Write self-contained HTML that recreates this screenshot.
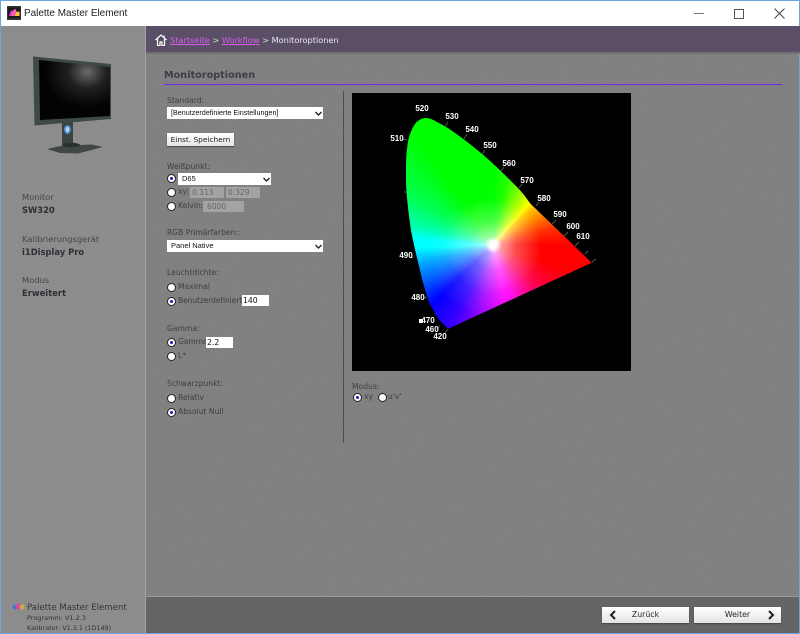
<!DOCTYPE html>
<html><head><meta charset="utf-8"><style>
html,body{margin:0;padding:0;background:#808080}
#r{position:relative;width:800px;height:634px;overflow:hidden;background:#808080;font-family:"DejaVu Sans","Liberation Sans",sans-serif}
#r div,#r svg{position:absolute}
.t{white-space:nowrap;line-height:12px;height:12px}
.l{font-size:7.600px;color:#3f3f44}
.s{font-size:8.350px;color:#46464a}
.b{font-size:8.400px;color:#2e3036;font-weight:bold}
.sel,.in{background:#fff;color:#111;font-size:7.500px;line-height:12px;white-space:nowrap;font-family:"Liberation Sans",sans-serif}
.in.d{background:#a3a3a3;color:#666;font-family:"DejaVu Sans",sans-serif;font-size:7.500px;line-height:11px}
.rd{width:7px;height:7px;border-radius:50%;background:#fff;border:1px solid #222}
.rd.on::after{content:"";position:absolute;left:2px;top:2px;width:3px;height:3px;border-radius:50%;background:#1a18b8}
.w{color:#fff;font:bold 8px/10px "Liberation Sans",sans-serif;transform:translate(-50%,-50%);white-space:nowrap;position:absolute}
.btn{background:linear-gradient(#fff,#e4e4e4);box-shadow:0 1px 1px #444;color:#222;text-align:center;white-space:nowrap}
</style></head><body><div id="r">
<div style="left:146px;top:26px;width:654px;height:608px;background:#7e7e7e"></div>
<div style="left:0;top:26px;width:145px;height:608px;background:#8a8a8a"></div>
<div style="left:145px;top:26px;width:1px;height:608px;background:#a2a2a2"></div>
<svg style="left:0;top:26px;opacity:.1" width="800" height="608"><filter id="n"><feTurbulence type="fractalNoise" baseFrequency=".9" numOctaves="2"/><feColorMatrix type="saturate" values="0"/></filter><rect width="800" height="608" filter="url(#n)"/></svg>
<div style="left:0;top:0;width:800px;height:26px;background:#fff"></div>
<div style="left:0;top:0;width:800px;height:1px;background:#6ea5e0"></div>
<div style="left:0;top:0;width:1px;height:634px;background:#6ea5e0"></div>
<div style="left:799px;top:0;width:1px;height:634px;background:#6ea5e0"></div>
<div style="left:0;top:633px;width:800px;height:1px;background:#6ea5e0"></div>

<!-- title bar -->
<svg style="left:7px;top:6px" width="14" height="14" viewBox="0 0 14 14"><rect width="14" height="14" fill="#333"/><rect x="1" y="1.500" width="12" height="10.500" fill="#1a1a1a"/><path d="M2 10 Q3 5 5 4 L7 10Z" fill="#c43ae0"/><path d="M4 10 Q5 3 9 3 L10 10Z" fill="#f85ab0"/><path d="M8 10 Q9 4 12.500 6 L12.500 10Z" fill="#f8c830"/></svg>
<div class="t" style="left:24px;top:7px;font:9.950px/14px 'Liberation Sans',sans-serif;color:#222">Palette Master Element</div>
<div style="left:694px;top:13px;width:10px;height:1px;background:#777"></div>
<div style="left:734px;top:9px;width:8px;height:8px;border:1px solid #555"></div>
<svg style="left:774px;top:8px" width="11" height="11" viewBox="0 0 11 11"><path d="M.5.5L10.500 10.500M10.500.5L.5 10.500" stroke="#444" stroke-width="1" fill="none"/></svg>

<!-- breadcrumb -->
<div style="left:146px;top:26px;width:654px;height:26px;background:#5a4f67"></div>
<div style="left:146px;top:52px;width:654px;height:2px;background:#717171"></div>
<svg style="left:155px;top:34px" width="12" height="12" viewBox="0 0 12 12"><path d="M.5 6L6 1l5.500 5M2.500 5v6.500h2.500V8h2v3.500h2.500V5M9 1.500v2" fill="none" stroke="#fff" stroke-width="1.200"/></svg>
<div class="t" style="left:170px;top:34px;font-size:8.200px;color:#ddd"><span style="color:#d85cf0;text-decoration:underline">Startseite</span> &gt; <span style="color:#d85cf0;text-decoration:underline">Workflow</span> &gt; <span style="color:#e8e8f0">Monitoroptionen</span></div>

<!-- heading -->
<div class="t" style="left:164px;top:70px;font-size:9.700px;font-weight:bold;color:#3c3e46">Monitoroptionen</div>
<div style="left:164px;top:84px;width:618px;height:1px;background:#7a22e8"></div>
<div style="left:343px;top:91px;width:1px;height:352px;background:#4e4e4e"></div>

<!-- sidebar monitor -->
<svg style="left:30px;top:52px" width="86" height="105" viewBox="30 52 86 105">
<path d="M47 149L60 146 92 144.500 103 147 78 153.500 60 153Z" fill="#3f4845"/>
<rect x="62" y="122" width="11" height="23" fill="#3b4341"/>
<ellipse cx="67.500" cy="129.500" rx="3.500" ry="4.500" fill="#4f8fcf"/>
<ellipse cx="67.500" cy="129.500" rx="1.800" ry="2.800" fill="#b8d2e6"/>
<ellipse cx="71" cy="145" rx="9" ry="2.200" fill="#2a302e"/>
<path d="M33 56.500L111 64V119L34.500 125.500Z" fill="#3f4a47"/>
<defs><radialGradient id="sc" cx=".68" cy=".2" r=".6"><stop offset="0" stop-color="#6a6a6a"/><stop offset=".45" stop-color="#202020"/><stop offset="1" stop-color="#030303"/></radialGradient></defs>
<path d="M39 60L110 67V116L40 120Z" fill="url(#sc)"/>
</svg>

<div class="t s" style="left:22px;top:191px">Monitor</div>
<div class="t b" style="left:22px;top:204px">SW320</div>
<div class="t s" style="left:22px;top:233px">Kalibrierungsgerät</div>
<div class="t b" style="left:22px;top:246px">i1Display Pro</div>
<div class="t s" style="left:22px;top:274px">Modus</div>
<div class="t b" style="left:22px;top:287px">Erweitert</div>

<!-- footer sidebar -->
<svg style="left:12px;top:603px" width="13" height="8" viewBox="0 0 13 8"><circle cx="3" cy="4" r="2.500" fill="#3a78c8"/><circle cx="6.500" cy="3.500" r="3" fill="#d84aa8"/><circle cx="10" cy="4" r="2.500" fill="#c8b040"/></svg>
<div class="t" style="left:27px;top:602px;font-size:8.550px;color:#35353a">Palette Master Element</div>
<div class="t" style="left:27px;top:612px;font-size:6.500px;color:#333">Programm: V1.2.3</div>
<div class="t" style="left:27px;top:622px;font-size:6.400px;color:#333">Kalibrator: V1.3.1 (1D149)</div>

<!-- form -->
<div class="t l" style="left:167px;top:95px">Standard:</div>
<div class="sel" style="left:167px;top:107px;width:156px;height:12px;text-indent:4px;font-size:7.200px">[Benutzerdefinierte Einstellungen]</div>
<svg style="left:315px;top:111px" width="7" height="5" viewBox="0 0 7 5"><path d="M.5 1L3.500 4 6.500 1" fill="none" stroke="#222" stroke-width="1.400"/></svg>
<div class="btn" style="left:167px;top:133px;width:67px;height:13px;font:7.400px/13px 'DejaVu Sans',sans-serif">Einst. Speichern</div>

<div class="t l" style="left:167px;top:161px">Weißpunkt:</div>
<div class="rd on" style="left:167px;top:174px"></div>
<div class="sel" style="left:178px;top:173px;width:93px;height:12px;text-indent:4px">D65</div>
<svg style="left:263px;top:177px" width="7" height="5" viewBox="0 0 7 5"><path d="M.5 1L3.500 4 6.500 1" fill="none" stroke="#222" stroke-width="1.400"/></svg>
<div class="rd" style="left:167px;top:188px"></div>
<div class="t l" style="left:178px;top:186px">xy:</div>
<div class="in d" style="left:190px;top:187px;width:34px;height:11px;text-indent:2px">0.313</div>
<div class="in d" style="left:226px;top:187px;width:34px;height:11px;text-indent:2px">0.329</div>
<div class="rd" style="left:167px;top:202px"></div>
<div class="t l" style="left:178px;top:200px">Kelvin:</div>
<div class="in d" style="left:203px;top:201px;width:41px;height:11px;text-indent:4px">6000</div>

<div class="t l" style="left:167px;top:227px">RGB Primärfarben::</div>
<div class="sel" style="left:167px;top:240px;width:156px;height:12px;text-indent:4px">Panel Native</div>
<svg style="left:315px;top:244px" width="7" height="5" viewBox="0 0 7 5"><path d="M.5 1L3.500 4 6.500 1" fill="none" stroke="#222" stroke-width="1.400"/></svg>

<div class="t l" style="left:167px;top:267px">Leuchtdichte:</div>
<div class="rd" style="left:167px;top:283px"></div>
<div class="t l" style="left:178px;top:281px">Maximal</div>
<div class="rd on" style="left:167px;top:297px"></div>
<div class="t l" style="left:178px;top:295px;letter-spacing:-.12px">Benutzerdefiniert</div>
<div class="in" style="left:242px;top:295px;width:27px;height:11px;font:7.700px/11px 'DejaVu Sans',sans-serif;text-indent:1px">140</div>

<div class="t l" style="left:167px;top:323px">Gamma:</div>
<div class="rd on" style="left:167px;top:338px"></div>
<div class="t l" style="left:178px;top:336px;letter-spacing:-.1px">Gamma</div>
<div class="in" style="left:206px;top:337px;width:27px;height:11px;font:7.700px/11px 'DejaVu Sans',sans-serif;text-indent:1px">2.2</div>
<div class="rd" style="left:167px;top:352px"></div>
<div class="t l" style="left:178px;top:350px">L*</div>

<div class="t l" style="left:167px;top:378px">Schwarzpunkt:</div>
<div class="rd" style="left:167px;top:394px"></div>
<div class="t l" style="left:178px;top:392px">Relativ</div>
<div class="rd on" style="left:167px;top:408px"></div>
<div class="t l" style="left:178px;top:406px">Absolut Null</div>

<!-- diagram -->
<div style="left:352px;top:93px;width:279px;height:278px;background:#000"></div>
<svg style="left:0;top:0" width="800" height="634"><path d="M445 127l3-5M464 139l3-5M482 154l3-4M501 171l3-4M519 188l3-4M536 206l3-4M552 224l4-4M564 236l4-4M575 246l4-4M585 254l3-3M592 262l4-3M403 139l4 1M404 192l3 0M411 258l3-1M424 298l3-1M440 326l-3 3M448 329l-3 4" stroke="#555" stroke-width="1" fill="none"/></svg>
<div style="left:0;top:0;width:800px;height:634px;clip-path:path('M448.300 328.700C442 323 439 320 437.300 316.700C432 308 430 305 427.300 296.700C422 280 420 270 416.700 256.700C413 240 411 232 410 223.300C407 200 406 190 406 176.700C406 165 406 155 407.300 146.700C408 139 410 134 411.700 130C414 125 416 122 418.300 120.700C421 118.500 424 117.800 426.700 118C430 118.300 433 119.800 436.700 121.700C443 125 448 128 453.300 131.700C465 140 474 147 483.300 155C495 165 506 176 516.700 186.700C521 191 526 197 530 203.300L591.700 262.700Z');background:radial-gradient(circle at 493px 245px,#fff 0,#fff 3.500px,rgba(255,255,255,.5) 9px,rgba(255,255,255,.18) 24px,rgba(255,255,255,0) 48px),radial-gradient(circle at 485px 258px,rgba(255,255,255,.28) 0,rgba(255,255,255,.14) 30px,rgba(255,255,255,0) 58px),conic-gradient(from 0deg at 493px 245px,#0f0 0deg,#2f0 12deg,#8f0 26deg,#df0 37deg,#ff0 41deg,#fc0 46deg,#f80 58deg,#f30 74deg,#f00 90deg,#f00 108deg,#f05 135deg,#f0e 160deg,#f0f 168deg,#a0f 188deg,#30f 208deg,#00f 226deg,#05f 240deg,#0af 256deg,#0ff 268deg,#0ff 274deg,#0fa 284deg,#0f5 300deg,#0f0 325deg,#0f0 360deg)"></div>
<div class="w" style="left:422px;top:109px">520</div>
<div class="w" style="left:452px;top:117px">530</div>
<div class="w" style="left:472px;top:130px">540</div>
<div class="w" style="left:490px;top:146px">550</div>
<div class="w" style="left:509px;top:164px">560</div>
<div class="w" style="left:527px;top:181px">570</div>
<div class="w" style="left:544px;top:199px">580</div>
<div class="w" style="left:560px;top:215px">590</div>
<div class="w" style="left:573px;top:227px">600</div>
<div class="w" style="left:583px;top:237px">610</div>
<div class="w" style="left:397px;top:139px">510</div>
<div class="w" style="left:406px;top:256px">490</div>
<div class="w" style="left:418px;top:298px">480</div>
<div class="w" style="left:428px;top:321px">470</div>
<div style="left:419px;top:319px;width:4px;height:4px;background:#fff"></div>
<div class="w" style="left:432px;top:330px">460</div>
<div class="w" style="left:440px;top:337px">420</div>

<div class="t l" style="left:352px;top:381px">Modus:</div>
<div class="rd on" style="left:353px;top:393px"></div>
<div class="t l" style="left:364px;top:391px">xy</div>
<div class="rd" style="left:378px;top:393px"></div>
<div class="t l" style="left:388px;top:391px">u'v'</div>

<!-- bottom bar -->
<div style="left:146px;top:597px;width:653px;height:36px;background:#656565"></div>
<div style="left:146px;top:596px;width:653px;height:1px;background:#9a9a9a"></div>
<div class="btn" style="left:602px;top:607px;width:87px;height:16px;font:7.800px/16px 'DejaVu Sans',sans-serif">Zurück</div>
<svg style="left:609px;top:610px" width="8" height="10" viewBox="0 0 8 10"><path d="M6 1L2 5 6 9" fill="none" stroke="#222" stroke-width="2"/></svg>
<div class="btn" style="left:694px;top:607px;width:87px;height:16px;font:7.800px/16px 'DejaVu Sans',sans-serif">Weiter</div>
<svg style="left:767px;top:610px" width="8" height="10" viewBox="0 0 8 10"><path d="M2 1L6 5 2 9" fill="none" stroke="#222" stroke-width="2"/></svg>
</div></body></html>
